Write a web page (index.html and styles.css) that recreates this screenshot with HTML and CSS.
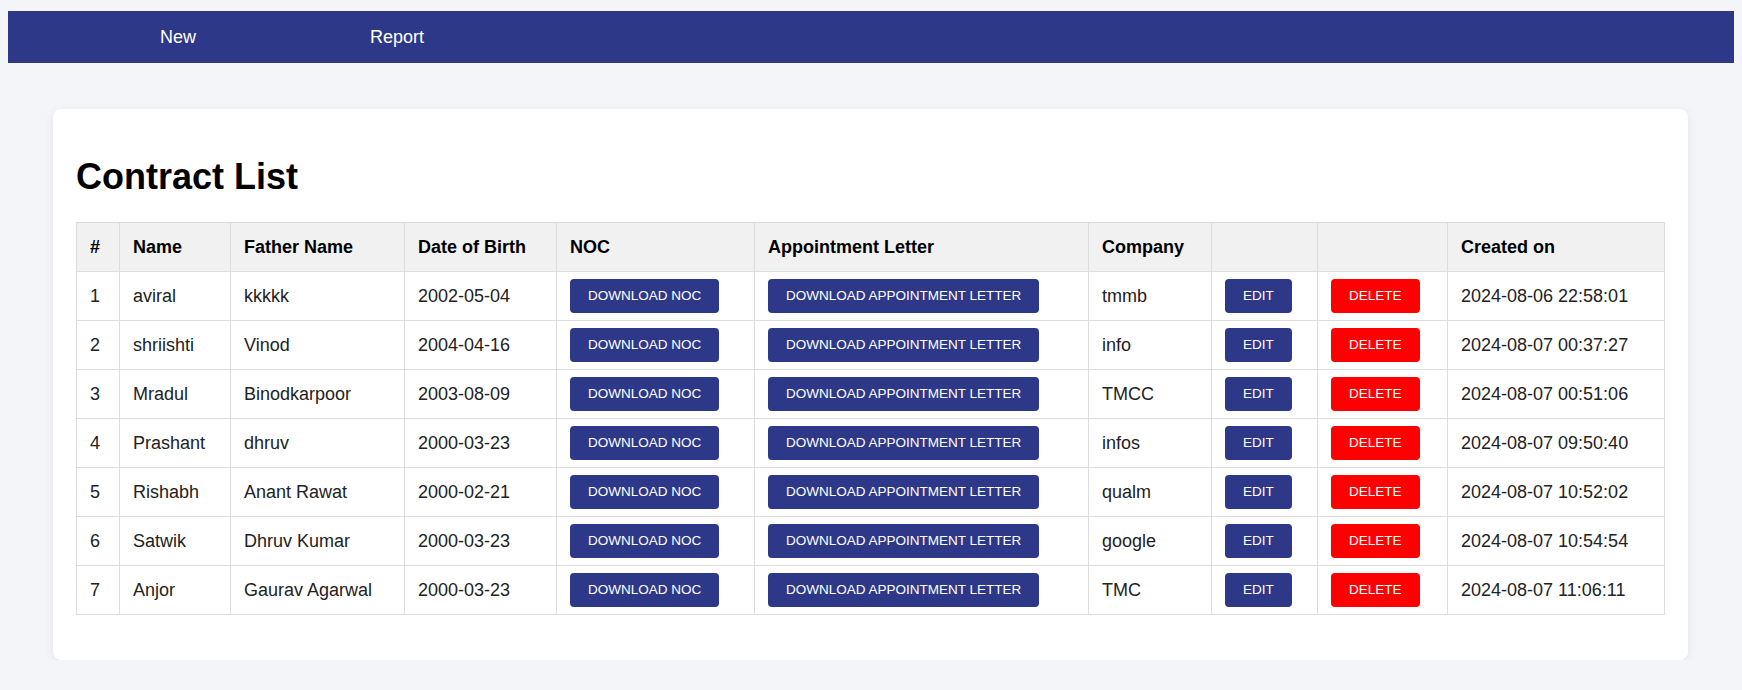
FILE: index.html
```html
<!DOCTYPE html>
<html lang="en">
<head>
<meta charset="utf-8">
<title>Contract List</title>
<link rel="stylesheet" href="styles.css">
</head>
<body>
<nav class="navbar">
  <a class="nav-link" href="#">New</a>
  <a class="nav-link" href="#">Report</a>
</nav>
<main class="card">
  <h1 class="title">Contract List</h1>
  <table class="list">
    <thead>
      <tr>
        <th class="c-num">#</th>
        <th class="c-name">Name</th>
        <th class="c-father">Father Name</th>
        <th class="c-dob">Date of Birth</th>
        <th class="c-noc">NOC</th>
        <th class="c-appt">Appointment Letter</th>
        <th class="c-company">Company</th>
        <th class="c-edit"></th>
        <th class="c-del"></th>
        <th class="c-created">Created on</th>
      </tr>
    </thead>
    <tbody>
      <tr>
        <td>1</td><td>aviral</td><td>kkkkk</td><td>2002-05-04</td>
        <td><button class="btn btn-blue">Download NOC</button></td>
        <td><button class="btn btn-blue">Download Appointment Letter</button></td>
        <td>tmmb</td>
        <td><button class="btn btn-blue">Edit</button></td>
        <td><button class="btn btn-red">Delete</button></td>
        <td>2024-08-06 22:58:01</td>
      </tr>
      <tr>
        <td>2</td><td>shriishti</td><td>Vinod</td><td>2004-04-16</td>
        <td><button class="btn btn-blue">Download NOC</button></td>
        <td><button class="btn btn-blue">Download Appointment Letter</button></td>
        <td>info</td>
        <td><button class="btn btn-blue">Edit</button></td>
        <td><button class="btn btn-red">Delete</button></td>
        <td>2024-08-07 00:37:27</td>
      </tr>
      <tr>
        <td>3</td><td>Mradul</td><td>Binodkarpoor</td><td>2003-08-09</td>
        <td><button class="btn btn-blue">Download NOC</button></td>
        <td><button class="btn btn-blue">Download Appointment Letter</button></td>
        <td>TMCC</td>
        <td><button class="btn btn-blue">Edit</button></td>
        <td><button class="btn btn-red">Delete</button></td>
        <td>2024-08-07 00:51:06</td>
      </tr>
      <tr>
        <td>4</td><td>Prashant</td><td>dhruv</td><td>2000-03-23</td>
        <td><button class="btn btn-blue">Download NOC</button></td>
        <td><button class="btn btn-blue">Download Appointment Letter</button></td>
        <td>infos</td>
        <td><button class="btn btn-blue">Edit</button></td>
        <td><button class="btn btn-red">Delete</button></td>
        <td>2024-08-07 09:50:40</td>
      </tr>
      <tr>
        <td>5</td><td>Rishabh</td><td>Anant Rawat</td><td>2000-02-21</td>
        <td><button class="btn btn-blue">Download NOC</button></td>
        <td><button class="btn btn-blue">Download Appointment Letter</button></td>
        <td>qualm</td>
        <td><button class="btn btn-blue">Edit</button></td>
        <td><button class="btn btn-red">Delete</button></td>
        <td>2024-08-07 10:52:02</td>
      </tr>
      <tr>
        <td>6</td><td>Satwik</td><td>Dhruv Kumar</td><td>2000-03-23</td>
        <td><button class="btn btn-blue">Download NOC</button></td>
        <td><button class="btn btn-blue">Download Appointment Letter</button></td>
        <td>google</td>
        <td><button class="btn btn-blue">Edit</button></td>
        <td><button class="btn btn-red">Delete</button></td>
        <td>2024-08-07 10:54:54</td>
      </tr>
      <tr>
        <td>7</td><td>Anjor</td><td>Gaurav Agarwal</td><td>2000-03-23</td>
        <td><button class="btn btn-blue">Download NOC</button></td>
        <td><button class="btn btn-blue">Download Appointment Letter</button></td>
        <td>TMC</td>
        <td><button class="btn btn-blue">Edit</button></td>
        <td><button class="btn btn-red">Delete</button></td>
        <td>2024-08-07 11:06:11</td>
      </tr>
    </tbody>
  </table>
</main>
</body>
</html>
```

FILE: styles.css
```css
html {
  background: #f4f5f9;
}

body {
  margin: 11px 8px 0;
  font-family: "Liberation Sans", Arial, sans-serif;
  font-size: 18px;
  color: #222;
  background: #f4f5f9;
}

.navbar {
  display: flex;
  align-items: center;
  gap: 174px;
  height: 52px;
  padding-left: 152px;
  background: #2d3988;
}

.nav-link {
  color: #ffffff;
  text-decoration: none;
  font-size: 18px;
}

.card {
  display: block;
  margin: 46px 46px 0 45px;
  padding: 23px;
  background: #ffffff;
  border-radius: 8px;
  box-shadow: 0 2px 10px rgba(0, 0, 0, 0.08);
}

.title {
  margin: 24px 0;
  font-size: 36px;
  font-weight: bold;
  color: #000;
}

.list {
  width: 100%;
  table-layout: fixed;
  border-collapse: collapse;
  margin-bottom: 22px;
}

.list th,
.list td {
  box-sizing: border-box;
  border: 1px solid #dddddd;
  text-align: left;
  padding: 7px 13px;
  white-space: nowrap;
}

.list th {
  height: 49px;
  padding: 13px 13px;
  background: #f1f1f1;
  font-weight: bold;
  color: #000;
}

.list td {
  height: 49px;
}

.c-num { width: 43px; }
.c-name { width: 111px; }
.c-father { width: 174px; }
.c-dob { width: 152px; }
.c-noc { width: 198px; }
.c-appt { width: 334px; }
.c-company { width: 123px; }
.c-edit { width: 106px; }
.c-del { width: 130px; }

.btn {
  display: inline-block;
  vertical-align: middle;
  border: none;
  border-radius: 4px;
  padding: 9px 18px;
  font-family: "Liberation Sans", Arial, sans-serif;
  font-size: 13.5px;
  line-height: 15.5px;
  text-transform: uppercase;
  color: #ffffff;
  cursor: pointer;
}

.btn-blue {
  background: #2d3988;
}

.btn-red {
  background: #ff0000;
}
```
